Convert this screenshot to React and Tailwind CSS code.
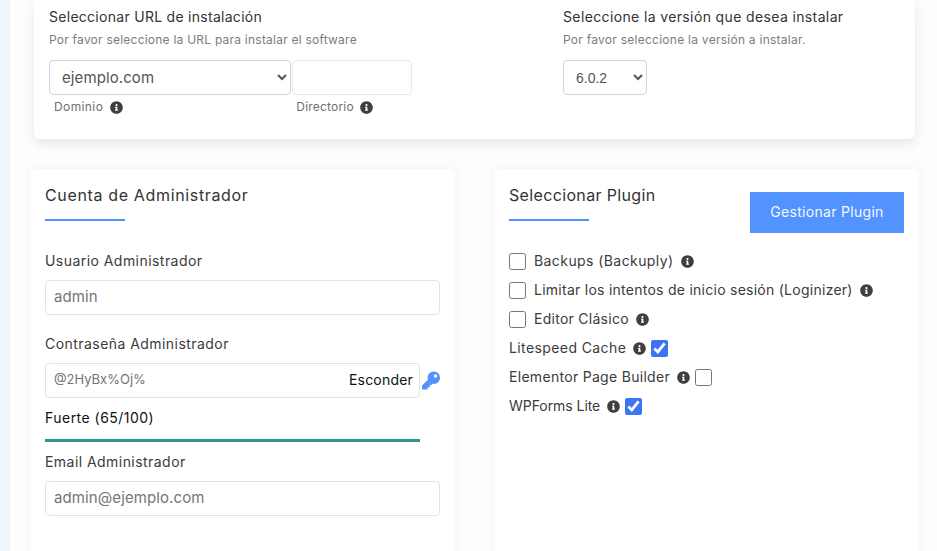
import React from "react";
import { FaInfoCircle, FaKey } from "react-icons/fa";

const font = "font-['Inter','Liberation_Sans',sans-serif]";

const plugins = [
  { name: "Backups (Backuply)", track: "tracking-[0.42px]", boxFirst: true },
  { name: "Limitar los intentos de inicio sesión (Loginizer)", track: "tracking-[0.26px]", boxFirst: true },
  { name: "Editor Clásico", track: "tracking-[0.27px]", boxFirst: true },
  { name: "Litespeed Cache", track: "tracking-[0.4px]", checked: true },
  { name: "Elementor Page Builder", track: "tracking-[0.3px]" },
  { name: "WPForms Lite", track: "tracking-[-0.05px]", checked: true },
];

function Info() {
  return <FaInfoCircle className="inline-block size-[13px] text-[#3f3f3f] shrink-0" />;
}

function Heading({ children, track }) {
  return (
    <div>
      <h3 className={`text-[16px] leading-[20px] text-[#333] ${track}`}>{children}</h3>
      <div className="mt-[14px] h-[2px] w-[80px] bg-[#5393ff]"></div>
    </div>
  );
}

function Field({ label, value, className }) {
  return (
    <div className={className}>
      <label className="block text-[14px] leading-[20px] tracking-[0.45px] text-[#3b3b3b]">{label}</label>
      <input
        readOnly
        value={value}
        className="mt-[9px] block h-[35px] w-[395px] rounded-[4px] border border-[#e3e3e3] bg-white px-[8px] pb-[2px] text-[15px] tracking-[0.1px] text-[#757575] outline-none"
      />
    </div>
  );
}

function Check({ checked }) {
  return (
    <input
      type="checkbox"
      readOnly
      checked={!!checked}
      className="m-0 size-[17px] shrink-0 accent-[#3d74f6]"
    />
  );
}

function App() {
  return (
    <div className={`flex h-[551px] w-[937px] overflow-hidden bg-[#fdfdfd] ${font}`}>
      <div className="w-[10px] shrink-0 bg-[#f0f5fa]"></div>

      <div className="flex-1">
        <div className="ml-[24px] flex h-[139px] w-[881px] rounded-b-[6px] bg-white pl-[15px] pt-[8px] shadow-[0_5px_12px_rgba(0,0,0,0.09)]">
          <div className="w-[514px]">
            <p className="text-[14px] leading-[18px] tracking-[0.28px] text-[#333]">Seleccionar URL de instalación</p>
            <p className="mt-[6px] text-[12px] leading-[16px] tracking-[0.23px] text-[#7b7b85]">Por favor seleccione la URL para instalar el software</p>
            <div className="mt-[12px] flex">
              <select className="h-[35px] w-[242px] rounded-[4px] border border-[#ced4da] bg-white pl-[8px] text-[15px] tracking-[0.1px] text-[#555]">
                <option>ejemplo.com</option>
              </select>
              <input readOnly className="ml-[1px] h-[35px] w-[120px] rounded-[4px] border border-[#e9e9e9] bg-white" />
            </div>
            <div className="mt-[4px] flex items-center text-[12px] leading-[16px] text-[#6f6f6f]">
              <span className="ml-[5px] tracking-[0.4px]">Dominio</span>
              <span className="ml-[7px] flex"><Info /></span>
              <span className="ml-[173px] tracking-[0.2px]">Directorio</span>
              <span className="ml-[6px] flex"><Info /></span>
            </div>
          </div>
          <div>
            <p className="text-[14px] leading-[18px] tracking-[0.37px] text-[#333]">Seleccione la versión que desea instalar</p>
            <p className="mt-[6px] text-[12px] leading-[16px] tracking-[0.26px] text-[#7b7b85]">Por favor seleccione la versión a instalar.</p>
            <select className="mt-[12px] h-[35px] w-[84px] rounded-[4px] border border-[#ced4da] bg-white pl-[8px] font-['Liberation_Sans',sans-serif] text-[14px] text-[#555]">
              <option>6.0.2</option>
            </select>
          </div>
        </div>

        <div className="mt-[30px] flex items-start">
          <div className="ml-[20px] h-[420px] w-[425px] rounded-[6px] bg-white px-[15px] pt-[16px] shadow-[0_0_8px_rgba(0,0,0,0.05)]">
            <Heading track="tracking-[0.65px]">Cuenta de Administrador</Heading>
            <Field className="mt-[30px]" label="Usuario Administrador" value="admin" />

            <div className="mt-[19px]">
              <label className="block text-[14px] leading-[20px] tracking-[0.45px] text-[#3b3b3b]">Contraseña Administrador</label>
              <div className="mt-[9px] flex items-center">
                <div className="flex h-[35px] w-[375px] shrink-0 items-center justify-between rounded-[4px] border border-[#e3e3e3] bg-white pb-[2px] pl-[8px] pr-[6px]">
                  <span className="text-[13px] text-[#757575]">@2HyBx%Oj%</span>
                  <span className="text-[14px] tracking-[0.2px] text-[#111]">Esconder</span>
                </div>
                <FaKey className="ml-[2px] size-[19px] text-[#5393ff]" />
              </div>
            </div>

            <p className="mt-[10px] text-[14px] leading-[20px] tracking-[0.47px] text-[#111]">Fuerte (65/100)</p>
            <div className="mt-[11px] h-[3px] w-[375px] bg-[#2f9585]"></div>
            <Field className="mt-[10px]" label="Email Administrador" value="admin@ejemplo.com" />
          </div>

          <div className="ml-[39px] h-[420px] w-[425px] rounded-[6px] bg-white px-[15px] pt-[16px] shadow-[0_0_8px_rgba(0,0,0,0.05)]">
            <div className="flex items-start justify-between">
              <Heading track="tracking-[0.35px]">Seleccionar Plugin</Heading>
              <button className="mt-[7px] h-[41px] w-[154px] bg-[#5393ff] pb-[2px] text-[14px] tracking-[0.3px] text-[#f4f8ff]">Gestionar Plugin</button>
            </div>
            <ul className="mt-[18px] flex flex-col gap-[9px] text-[14px] leading-[20px] text-[#3b3b3b]">
              {plugins.map((p) => (
                <li key={p.name} className="flex items-center">
                  {p.boxFirst && <Check />}
                  <span className={`${p.boxFirst ? "ml-[8px]" : ""} ${p.track}`}>{p.name}</span>
                  <span className="ml-[7px] mr-[5px] flex"><Info /></span>
                  {!p.boxFirst && <Check checked={p.checked} />}
                </li>
              ))}
            </ul>
          </div>
        </div>
      </div>
    </div>
  );
}

export default App;
